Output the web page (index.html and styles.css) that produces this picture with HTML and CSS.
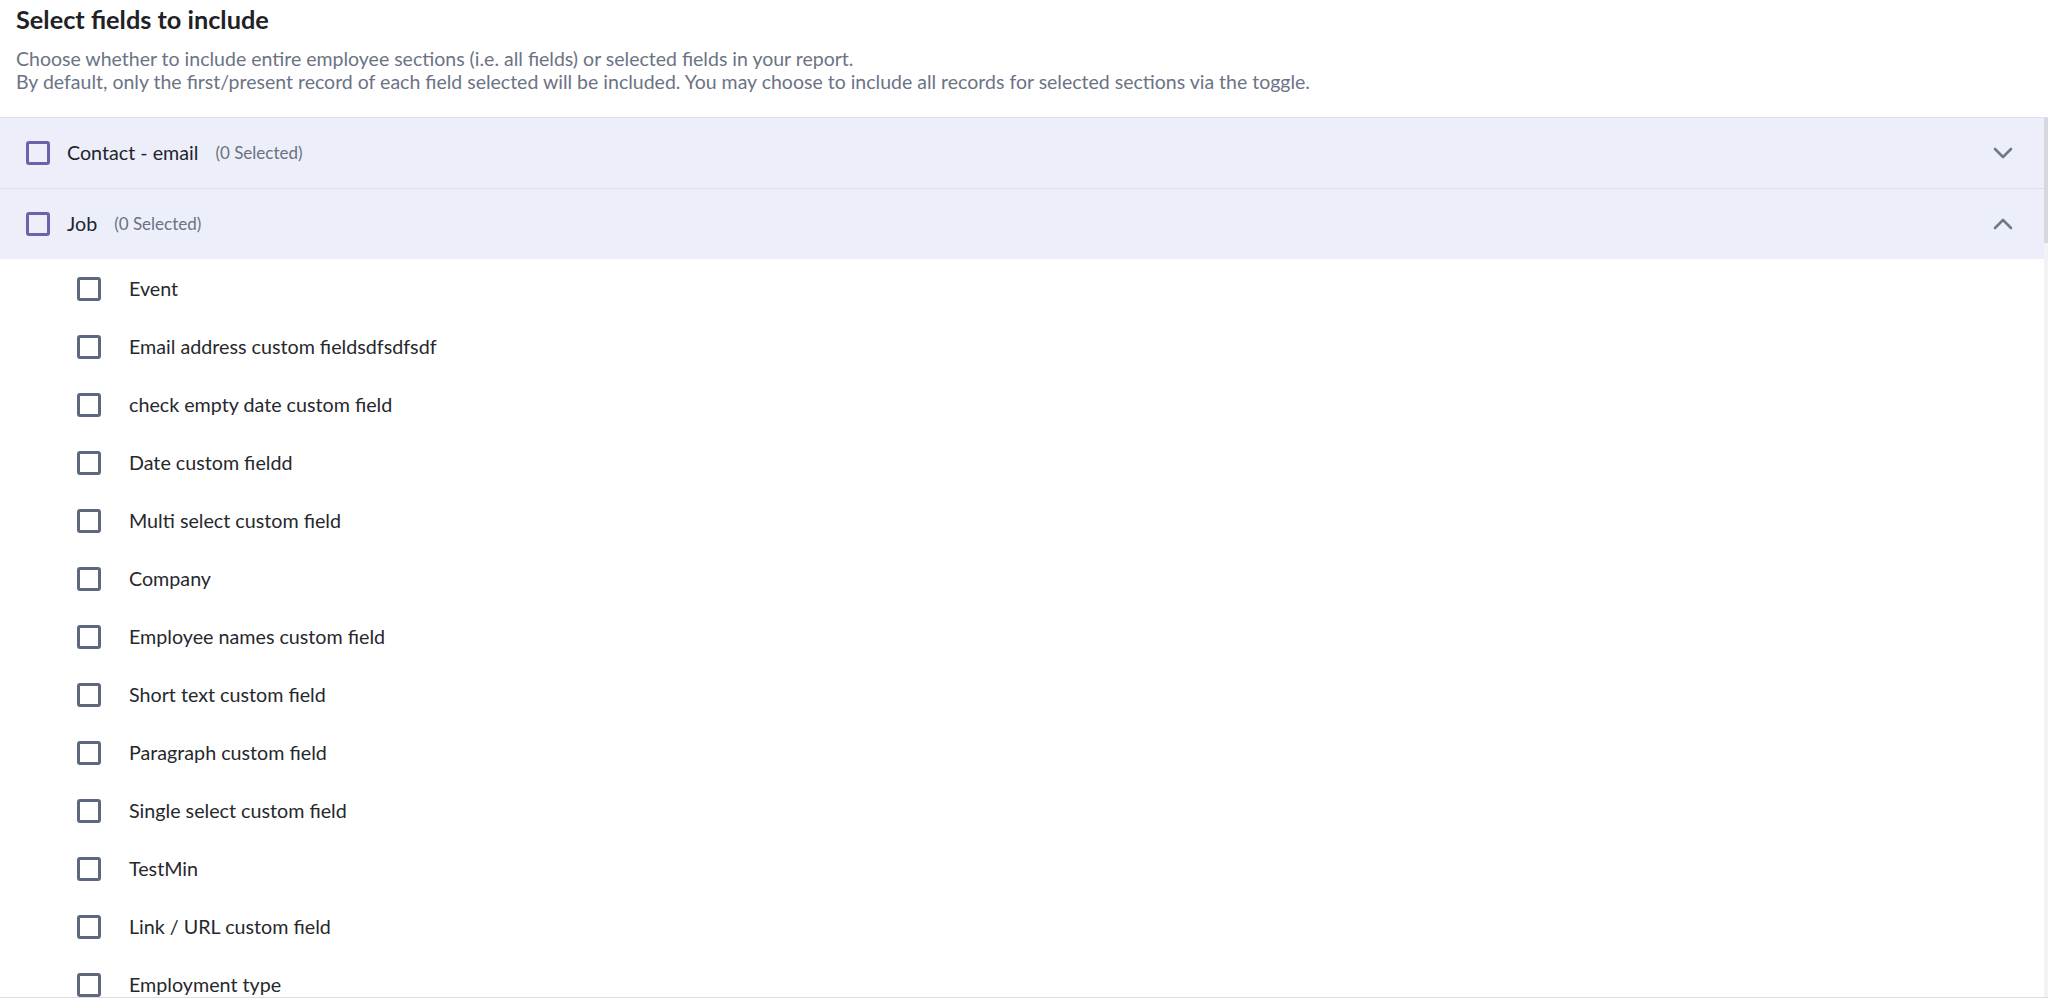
FILE: index.html
```html
<!DOCTYPE html>
<html lang="en">
<head>
<meta charset="utf-8">
<title>Select fields to include</title>
<link rel="stylesheet" href="styles.css">
</head>
<body>
<div class="page">
  <header class="intro">
    <h1 class="title">Select fields to include</h1>
    <p class="desc">Choose whether to include entire employee sections (i.e. all fields) or selected fields in your report.<br>By default, only the first/present record of each field selected will be included. You may choose to include all records for selected sections via the toggle.</p>
  </header>
  <div class="panel">
    <div class="list">
      <div class="section-head bordered">
        <span class="box box-section"></span>
        <span class="section-name">Contact - email</span>
        <span class="count">(0 Selected)</span>
        <svg class="chev" viewBox="0 0 20 12" width="20" height="12"><polyline points="2,2 10,10 18,2" /></svg>
      </div>
      <div class="section-head">
        <span class="box box-section"></span>
        <span class="section-name">Job</span>
        <span class="count">(0 Selected)</span>
        <svg class="chev" viewBox="0 0 20 12" width="20" height="12"><polyline points="2,10 10,2 18,10" /></svg>
      </div>
      <div class="items">
        <div class="item"><span class="box box-item"></span><span class="item-name">Event</span></div>
        <div class="item"><span class="box box-item"></span><span class="item-name">Email address custom fieldsdfsdfsdf</span></div>
        <div class="item"><span class="box box-item"></span><span class="item-name">check empty date custom field</span></div>
        <div class="item"><span class="box box-item"></span><span class="item-name">Date custom fieldd</span></div>
        <div class="item"><span class="box box-item"></span><span class="item-name">Multi select custom field</span></div>
        <div class="item"><span class="box box-item"></span><span class="item-name">Company</span></div>
        <div class="item"><span class="box box-item"></span><span class="item-name">Employee names custom field</span></div>
        <div class="item"><span class="box box-item"></span><span class="item-name">Short text custom field</span></div>
        <div class="item"><span class="box box-item"></span><span class="item-name">Paragraph custom field</span></div>
        <div class="item"><span class="box box-item"></span><span class="item-name">Single select custom field</span></div>
        <div class="item"><span class="box box-item"></span><span class="item-name">TestMin</span></div>
        <div class="item"><span class="box box-item"></span><span class="item-name">Link / URL custom field</span></div>
        <div class="item"><span class="box box-item"></span><span class="item-name">Employment type</span></div>
      </div>
    </div>
    <div class="scrollbar"><div class="thumb"></div></div>
  </div>
</div>
</body>
</html>
```
FILE: styles.css
```css
html, body {
  margin: 0;
  padding: 0;
  height: 100%;
  overflow: hidden;
  background: #ffffff;
}
body {
  font-family: Lato, "Noto Sans", "Liberation Sans", sans-serif;
  color: #24262b;
}
.page {
  height: 100vh;
  display: flex;
  flex-direction: column;
}
.intro {
  padding: 3px 16px 23px;
  flex: 0 0 auto;
}
.title {
  margin: 0;
  font-size: 25.3px;
  line-height: 32px;
  font-weight: 700;
  color: #1f2126;
}
.desc {
  margin: 12px 0 0;
  font-size: 19.5px;
  line-height: 23.4px;
  color: #6b7385;
}
.panel {
  flex: 1 1 auto;
  min-height: 0;
  display: flex;
  border-top: 1px solid #dfe1e6;
  border-bottom: 1px solid #dcdde1;
  overflow: hidden;
}
.list {
  flex: 1 1 auto;
  min-width: 0;
  overflow: hidden;
}
.scrollbar {
  flex: 0 0 4px;
  background: #f3f3f5;
}
.thumb {
  height: 125px;
  background: #d6d8de;
}
.section-head {
  height: 70px;
  display: flex;
  align-items: center;
  background: #eceffa;
  padding: 0 31px 0 26px;
}
.section-head.bordered {
  height: 71px;
  box-sizing: border-box;
  border-bottom: 1px solid #dcdfea;
}
.box {
  box-sizing: border-box;
  width: 24px;
  height: 24px;
  border-radius: 3px;
  flex: 0 0 auto;
  background: transparent;
}
.box-section {
  border: 3px solid #6a62aa;
}
.box-item {
  border: 3px solid #5d687e;
}
.section-name {
  margin-left: 17px;
  font-size: 19.7px;
  color: #22242a;
}
.count {
  margin-left: 17px;
  font-size: 17px;
  color: #6b7180;
}
.chev {
  margin-left: auto;
  fill: none;
  stroke: #707988;
  stroke-width: 2.6;
  stroke-linecap: round;
  stroke-linejoin: round;
}
.items {
  display: flex;
  flex-direction: column;
  padding-top: 1px;
}
.item {
  height: 58px;
  flex: 0 0 58px;
  display: flex;
  align-items: center;
  padding-left: 77px;
}
.item-name {
  margin-left: 28px;
  font-size: 19.7px;
  color: #26282d;
}
```
